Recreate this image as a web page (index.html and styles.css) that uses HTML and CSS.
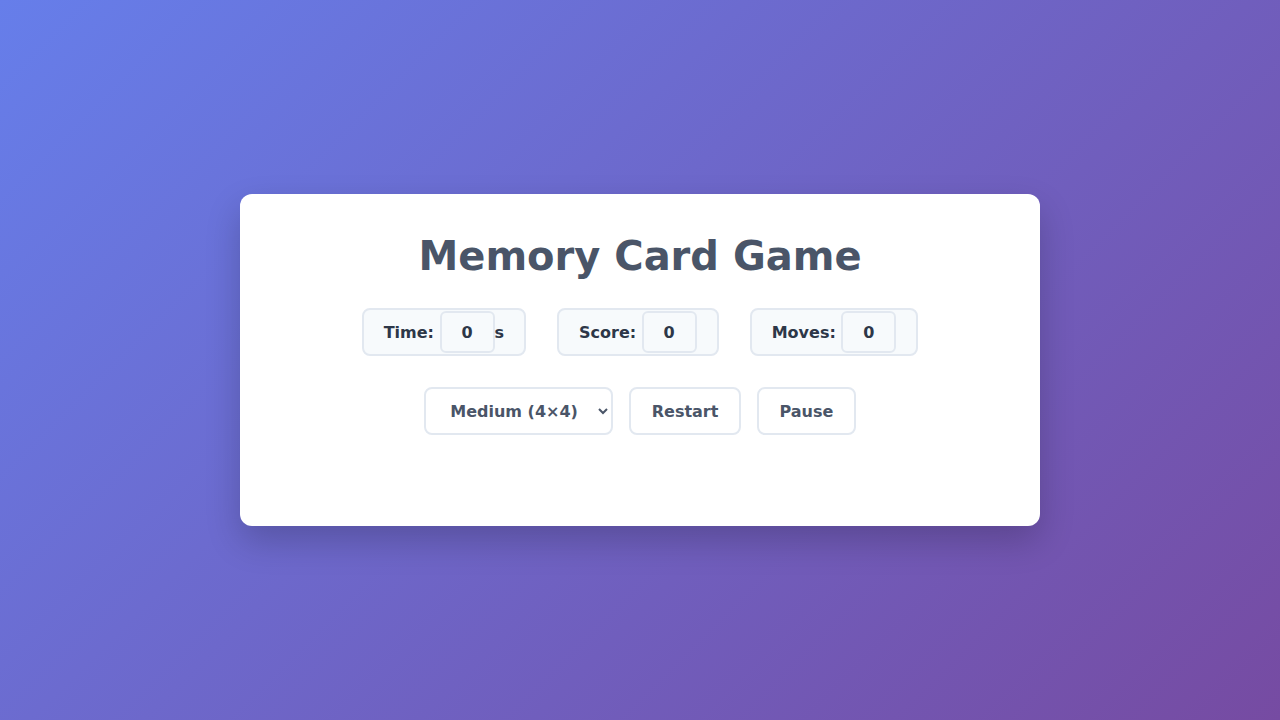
FILE: index.html
```html
<!DOCTYPE html>
<html lang="en">
<head>
<meta charset="utf-8">
<title>Memory Card Game</title>
<link rel="stylesheet" href="styles.css">
</head>
<body>
<main class="game">
  <h1 class="title">Memory Card Game</h1>
  <div class="stats">
    <div class="stat"><span class="stat-label">Time:</span><span class="stat-value">0</span><span class="stat-unit">s</span></div>
    <div class="stat"><span class="stat-label">Score:</span><span class="stat-value">0</span></div>
    <div class="stat"><span class="stat-label">Moves:</span><span class="stat-value">0</span></div>
  </div>
  <div class="controls">
    <select class="difficulty">
      <option>Easy (4×3)</option>
      <option selected>Medium (4×4)</option>
      <option>Hard (6×6)</option>
    </select>
    <button class="btn">Restart</button>
    <button class="btn">Pause</button>
  </div>
  <div class="board"></div>
</main>
</body>
</html>
```
FILE: styles.css
```css
* { box-sizing: border-box; }
html, body { height: 100%; }
body {
  margin: 0;
  font-family: "DejaVu Sans", sans-serif;
  background: linear-gradient(135deg, #667eea 0%, #764ba2 100%);
  display: flex;
  align-items: center;
  justify-content: center;
}
.game {
  width: 800px;
  background: #ffffff;
  border-radius: 12px;
  box-shadow: 0 15px 35px rgba(0, 0, 0, 0.2);
  padding: 39px 40px 41px;
  display: flex;
  flex-direction: column;
  align-items: center;
}
.title {
  margin: 0 0 28px;
  font-size: 40px;
  line-height: 47px;
  font-weight: 700;
  color: #4a5568;
}
.stats {
  display: flex;
  gap: 31px;
  justify-content: center;
}
.stat {
  display: flex;
  align-items: center;
  height: 48px;
  padding: 0 20px;
  background: #f7fafc;
  border: 2px solid #e2e8f0;
  border-radius: 8px;
  font-size: 16px;
  font-weight: 700;
  color: #2d3748;
}
.stat-label { margin-right: 5.5px; }
.stat-value {
  display: flex;
  align-items: center;
  justify-content: center;
  width: 55px;
  height: 42px;
  border: 2px solid #e2e8f0;
  border-radius: 6px;
  background: #f7fafc;
}
.controls {
  display: flex;
  gap: 16px;
  justify-content: center;
  margin-top: 31px;
}
.difficulty,
.btn {
  height: 48px;
  border: 2px solid #e2e8f0;
  border-radius: 8px;
  background: #ffffff;
  font-family: "DejaVu Sans", sans-serif;
  font-size: 16px;
  font-weight: 700;
  color: #4a5568;
}
.difficulty {
  width: 189px;
  padding: 0 6px 0 20px;
}
.btn {
  padding: 0 20.5px;
  cursor: pointer;
}
.board {
  height: 50px;
}
```
